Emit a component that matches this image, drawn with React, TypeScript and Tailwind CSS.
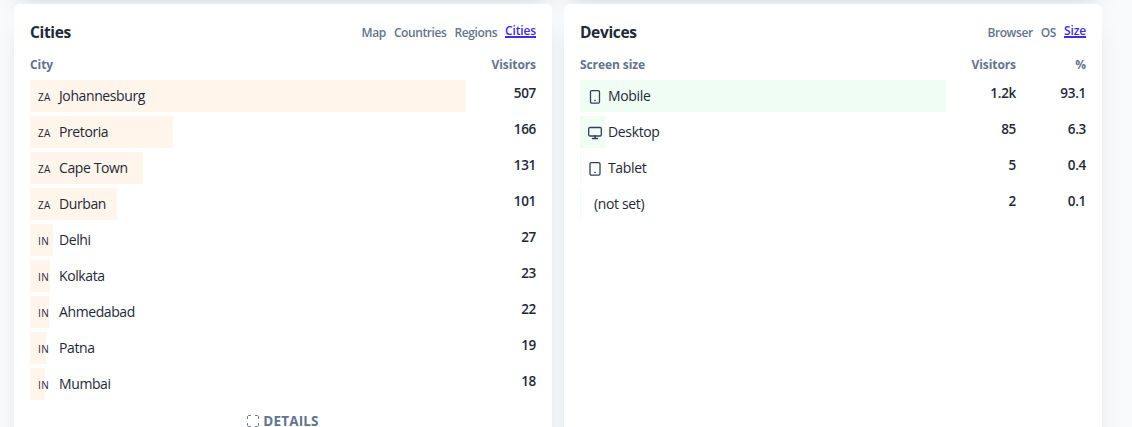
import type { ReactNode } from 'react';

type City = { country: string; name: string; visitors: number };
type Device = { icon: 'mobile' | 'desktop' | 'tablet' | null; name: string; visitors: string; share: number; bar: number };

const cities: City[] = [
  { country: 'ZA', name: 'Johannesburg', visitors: 507 },
  { country: 'ZA', name: 'Pretoria', visitors: 166 },
  { country: 'ZA', name: 'Cape Town', visitors: 131 },
  { country: 'ZA', name: 'Durban', visitors: 101 },
  { country: 'IN', name: 'Delhi', visitors: 27 },
  { country: 'IN', name: 'Kolkata', visitors: 23 },
  { country: 'IN', name: 'Ahmedabad', visitors: 22 },
  { country: 'IN', name: 'Patna', visitors: 19 },
  { country: 'IN', name: 'Mumbai', visitors: 18 },
];

const devices: Device[] = [
  { icon: 'mobile', name: 'Mobile', visitors: '1.2k', share: 93.1, bar: 366 },
  { icon: 'desktop', name: 'Desktop', visitors: '85', share: 6.3, bar: 25 },
  { icon: 'tablet', name: 'Tablet', visitors: '5', share: 0.4, bar: 1 },
  { icon: null, name: '(not set)', visitors: '2', share: 0.1, bar: 0.8 },
];

function DeviceIcon({ kind }: { kind: 'mobile' | 'desktop' | 'tablet' }) {
  return (
    <svg
      className="mt-[2px] h-[14px] w-[14px] shrink-0 text-slate-700"
      viewBox="0 0 14 14"
      fill="none"
      stroke="currentColor"
      strokeWidth="1.3"
      strokeLinecap="round"
      strokeLinejoin="round"
    >
      {kind === 'mobile' && <rect x="2.5" y=".7" width="9" height="12.4" rx="1.3" />}
      {kind === 'tablet' && <rect x="2" y=".7" width="10" height="12.4" rx="1.3" />}
      {kind === 'desktop' ? (
        <>
          <rect x=".7" y="1.5" width="12.6" height="8.5" rx="1.2" />
          <path d="M4.5 12.5h5M7 10v2.5" strokeWidth="1.5" />
        </>
      ) : (
        <path d="M6.8 10.5h.4" />
      )}
    </svg>
  );
}

function Card({ title, tabs, active, children }: { title: string; tabs: string[]; active: string; children: ReactNode }) {
  return (
    <section className="h-[436px] rounded-md bg-white p-4 shadow-[0_20px_25px_-5px_rgba(0,0,0,0.1),0_10px_10px_-5px_rgba(0,0,0,0.04)]">
      <div className="flex h-6 items-start justify-between">
        <h3 className="text-[15.5px] leading-6 font-bold tracking-[-0.35px] text-gray-800">{title}</h3>
        <div className="flex gap-2 pt-[3px] text-[12px] leading-5 font-semibold tracking-[-0.4px] text-slate-500">
          {tabs.map((tab) => (
            <button key={tab} className="block">{tab}</button>
          ))}
          <button className="mt-px block h-[14px] border-b-2 border-indigo-700 text-[12px] leading-[11px] font-semibold tracking-[-0.15px] text-indigo-700">
            {active}
          </button>
        </div>
      </div>
      {children}
    </section>
  );
}

function Heading({ children }: { children: ReactNode }) {
  return <span className="text-[12px] leading-4 font-bold tracking-[-0.08px] text-slate-500">{children}</span>;
}

function Value({ children }: { children: ReactNode }) {
  return <span className="pb-[6px] text-right text-[13.5px] leading-5 font-semibold tracking-[-0.3px] text-gray-800">{children}</span>;
}

export default function App() {
  return (
    <main className="h-[427px] overflow-hidden bg-slate-50 pl-[14px] font-['Open_Sans','Noto_Sans',sans-serif]">
      <div className="-mt-[408px] grid w-[1088px] grid-cols-2 gap-3">
        <section className="h-[400px] rounded-md bg-white shadow-[0_20px_25px_-5px_rgba(0,0,0,0.1),0_10px_10px_-5px_rgba(0,0,0,0.04)]" />
        <section className="h-[400px] rounded-md bg-white shadow-[0_20px_25px_-5px_rgba(0,0,0,0.1),0_10px_10px_-5px_rgba(0,0,0,0.04)]" />

        <Card title="Cities" tabs={['Map', 'Countries', 'Regions']} active="Cities">
          <div className="mt-[13px] mb-[7px] flex h-4 justify-between">
            <Heading>City</Heading>
            <Heading>Visitors</Heading>
          </div>
          <div className="flex flex-col gap-1">
            {cities.map((city) => (
              <div key={city.name} className="grid h-8 grid-cols-[436px_1fr] items-center">
                <div className="grid h-8 items-center">
                  <div className="col-start-1 row-start-1 h-8 bg-[#fff5eb]" style={{ width: `${(city.visitors / 507) * 100}%` }} />
                  <div className="col-start-1 row-start-1 flex items-center pl-2 text-gray-800">
                    <span className="w-[21px] pt-[2px] text-[10px] leading-5 tracking-[0.4px]">{city.country}</span>
                    <span className="text-[14px] leading-5 tracking-[-0.4px]">{city.name}</span>
                  </div>
                </div>
                <Value>{city.visitors}</Value>
              </div>
            ))}
          </div>
          <button className="mx-auto mt-[11px] flex h-4 items-center gap-1 text-[13.5px] leading-4 font-bold tracking-[0.15px] text-slate-500">
            <svg className="mt-[3px] h-3 w-3" viewBox="0 0 12 12" fill="none" stroke="currentColor" strokeWidth="1" strokeLinecap="round" strokeLinejoin="round">
              <path d="M.5 3.5v-2l1-1h2M8.5.5h2l1 1v2M.5 8.5v2l1 1h2M8.5 11.5h2l1-1v-2" />
            </svg>
            <span className="pt-[3px]">DETAILS</span>
          </button>
        </Card>

        <Card title="Devices" tabs={['Browser', 'OS']} active="Size">
          <div className="mt-[13px] mb-[7px] grid h-4 grid-cols-[366px_70px_70px]">
            <Heading>Screen size</Heading>
            <div className="flex justify-end"><Heading>Visitors</Heading></div>
            <div className="flex justify-end"><Heading>%</Heading></div>
          </div>
          <div className="flex flex-col gap-1">
            {devices.map((device) => (
              <div key={device.name} className="grid h-8 grid-cols-[366px_70px_70px] items-center">
                <div className="grid h-8 items-center">
                  <div className="col-start-1 row-start-1 h-8 bg-green-50" style={{ width: device.bar }} />
                  <div className="col-start-1 row-start-1 flex items-center pl-2 text-gray-800">
                    {device.icon && <DeviceIcon kind={device.icon} />}
                    <span className="pl-[6px] text-[14px] leading-5 tracking-[-0.35px]">{device.name}</span>
                  </div>
                </div>
                <Value>{device.visitors}</Value>
                <Value>{device.share}</Value>
              </div>
            ))}
          </div>
        </Card>
      </div>
    </main>
  );
}
